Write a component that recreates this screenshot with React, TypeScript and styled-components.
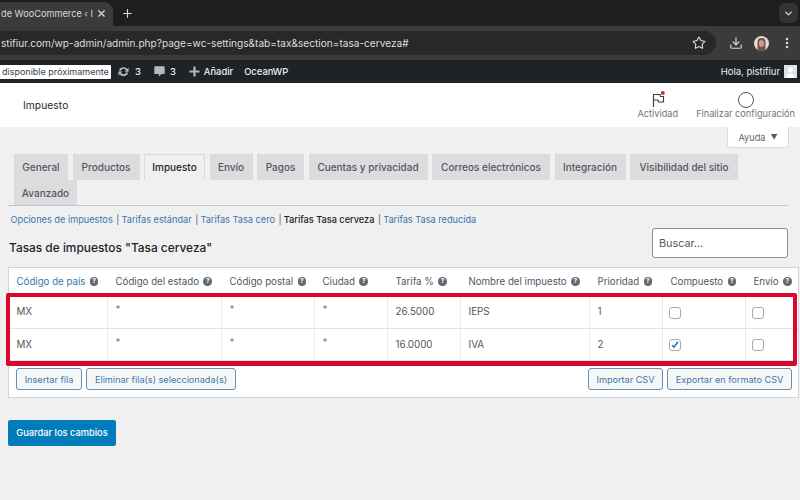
import React from "react";
import styled, { createGlobalStyle } from "styled-components";
import { X, Plus, Star, Download, MoreVertical, ChevronDown } from "lucide-react";

const Global = createGlobalStyle`
  html, body { margin: 0; padding: 0; background: #f0f0f1; }
  body { width: 800px; height: 500px; overflow: hidden; font-family: Inter, "Liberation Sans", sans-serif; color: #3c434a; }
  * { box-sizing: border-box; }
`;

const Page = styled.div`position: relative; width: 800px; height: 500px; overflow: hidden;`;

const TabStrip = styled.div`display: flex; align-items: flex-end; height: 26px; background: #1e1e1f; color: #e3e3e3;`;
const BrowserTab = styled.div`
  display: flex; align-items: center; justify-content: space-between; width: 113px; height: 24px; padding: 0 6px 2px 1px;
  background: #3b3b3c; border-radius: 0 9px 0 0; font-size: 9.2px; white-space: nowrap;
`;
const TabTitle = styled.span`color: #d8d8d8;`;
const NewTab = styled.div`display: flex; align-self: center; margin-left: 8px; color: #d8d8d8;`;
const TabMenu = styled.div`
  display: flex; align-items: center; justify-content: center; align-self: center;
  width: 19px; height: 20px; margin-left: auto; margin-right: 2px; border-radius: 6px; background: #343435; color: #dcdcdc;
`;

const Toolbar = styled.div`display: flex; align-items: flex-start; height: 34px; padding-top: 5px; background: #3b3b3c; color: #d8d8d8;`;
const Address = styled.div`
  display: flex; align-items: center; width: 716px; height: 24px; padding: 0 10px 0 1px; border-radius: 0 12px 12px 0;
  background: #282829; color: #dedede; font-size: 10.1px; white-space: nowrap;
`;
const Url = styled.span`flex: 1;`;
const ToolIcons = styled.div`display: flex; align-items: center; flex: 1; height: 24px; padding-left: 13px; gap: 11px;`;

const AdminBar = styled.div`
  display: flex; align-items: center; height: 23px; background: #1d2327; color: #eef0f1; font-size: 9.4px; font-weight: 500; white-space: nowrap;
`;
const Notice = styled.div`
  display: flex; align-items: center; width: 111px; height: 14px; padding-left: 2px; background: #fff; color: #3c434a; font-size: 9px; font-weight: 400; border-radius: 0 1px 1px 0;
`;
const BarItem = styled.div<{ $gap?: number; $left?: number }>`
  display: flex; align-items: center; gap: ${p => p.$gap ?? 5}px; margin-left: ${p => p.$left ?? 0}px;
`;
const Greeting = styled.div`display: flex; align-items: center; gap: 4px; margin-left: auto; margin-right: 3px; font-size: 9.5px; font-weight: 400;`;
const UserPic = styled.svg`display: block; width: 13px; height: 13px; background: #dfe1e3;`;

const Header = styled.div`display: flex; align-items: flex-start; height: 44px; background: #fff;`;
const HeaderTitle = styled.div`margin: 16px 0 0 23px; font-size: 10.2px; color: #23282d; letter-spacing: 0.1px;`;
const HeaderActions = styled.div`display: flex; margin-left: auto; margin-right: 5px; gap: 18px;`;
const HeaderAction = styled.div`
  display: flex; flex-direction: column; align-items: center; padding-top: 8px; font-size: 9.2px; color: #757575; white-space: nowrap;
`;
const ActionIcon = styled.div`display: flex; justify-content: center; align-items: flex-end; height: 17px;`;
const Ring = styled.div`width: 16px; height: 16px; border-radius: 50%; border: 1.2px solid #50575e;`;

const HelpRow = styled.div`display: flex; justify-content: flex-end; height: 27px; padding-right: 11px;`;
const HelpButton = styled.div`
  display: flex; align-items: center; justify-content: center; gap: 5px; width: 62px; height: 21px; background: #fff;
  border: 1px solid #dcdcde; border-top: 0; border-radius: 0 0 3px 3px; font-size: 9.2px; color: #646970;
`;
const Caret = styled.span`font-size: 7px; color: #50575e;`;

const TabsNav = styled.nav`
  display: flex; flex-wrap: wrap; width: 780px; margin-left: 8px; padding-left: 6px; column-gap: 4.5px; border-bottom: 1px solid #c3c4c7;
`;
const WcTab = styled.div<{ $w: number; $active?: boolean }>`
  display: flex; align-items: center; justify-content: center; width: ${p => p.$w}px; height: 25.5px;
  font-size: 10px; font-weight: 500; white-space: nowrap;
  background: ${p => (p.$active ? "#f0f0f1" : "#dcdcde")};
  color: ${p => (p.$active ? "#1d2327" : "#50575e")};
  border: 1px solid ${p => (p.$active ? "#d8d9db" : "#dcdcde")};
  border-bottom: 0;
`;

const SubNav = styled.div`
  display: flex; margin: 7px 0 0 10.5px; height: 13px; align-items: center; font-size: 9.2px; color: #50575e; white-space: nowrap;
`;
const SubLink = styled.span<{ $current?: boolean }>`
  color: ${p => (p.$current ? "#1d2327" : "#3a77ab")}; font-weight: ${p => (p.$current ? 500 : 400)};
`;
const Sep = styled.span`margin: 0 2.2px 0 3.5px; color: #50575e;`;

const TitleRow = styled.div`display: flex; align-items: flex-start; height: 41px; margin: 0 12px 0 9px;`;
const Title = styled.h2`margin: 14px 0 0; font-size: 11.9px; font-weight: 500; color: #1d2327; white-space: nowrap;`;
const Search = styled.div`
  display: flex; align-items: center; width: 136px; height: 30px; margin: 2px 0 0 auto; padding-left: 6px; background: #fff;
  border: 1px solid #8c8f94; border-radius: 3px; font-size: 10.8px; color: #50575e;
`;

const TableBox = styled.div`width: 791px; height: 131px; margin-left: 8px; background: #fff; border: 1px solid #d3d4d6;`;
const Cols = "99px 114px 93px 73px 73px 129px 73px 83px 53px";
const HeadRow = styled.div`display: grid; grid-template-columns: ${Cols}; height: 28px; align-items: center; border-bottom: 1px solid #eee;`;
const HeadCell = styled.div<{ $link?: boolean }>`
  display: flex; align-items: center; gap: 4.5px; padding-left: 7.5px; font-size: 9.7px; white-space: nowrap;
  color: ${p => (p.$link ? "#3a77ab" : "#50575e")};
`;
const Tip = styled.span`
  display: inline-flex; align-items: center; justify-content: center; width: 8.5px; height: 8.5px; border-radius: 50%;
  background: #646970; color: #fff; font-size: 6.5px; font-weight: 700; line-height: 1;
`;
const Row = styled.div`display: grid; grid-template-columns: ${Cols}; height: 32.5px; border-bottom: 1px solid #e4e4e6;`;
const Cell = styled.div`
  display: flex; align-items: center; padding-left: 7.5px; font-size: 9.8px; color: #50575e; border-right: 1px solid #eaeaeb;
  &:last-child { border-right: 0; }
`;
const Asterisk = styled.span`padding-bottom: 4px; color: #7b8187;`;
const Box = styled.span`
  display: flex; align-items: center; justify-content: center; width: 12px; height: 12px; margin: 2px 0 0 -2px; background: #fff;
  border: 1px solid #a7aaad; border-radius: 3px;
`;

const Footer = styled.div`display: flex; gap: 4px; padding: 7px 6px 0 7px;`;
const Spacer = styled.div`flex: 1;`;
const SmallButton = styled.div<{ $w: number }>`
  display: flex; align-items: center; justify-content: center; width: ${p => p.$w}px; height: 22px; font-size: 9.15px; white-space: nowrap;
  color: #3a77ab; background: #f6f7f7; border: 1px solid #6b8fb0; border-radius: 3px;
`;

const SaveButton = styled.div`
  display: flex; align-items: center; justify-content: center; width: 108px; height: 25.5px; margin: 22px 0 0 8px;
  background: #007cba; color: #fff; border-radius: 2px; font-size: 9.3px; font-weight: 500; white-space: nowrap;
`;

const Highlight = styled.div`
  position: absolute; left: 6px; top: 293px; width: 791px; height: 73px; border: 4px solid #d9062e; border-bottom-width: 5px; border-radius: 2px; pointer-events: none;
`;

const tabs: [string, number, boolean?][] = [
  ["General", 54], ["Productos", 67], ["Impuesto", 61, true], ["Envío", 43], ["Pagos", 47],
  ["Cuentas y privacidad", 119], ["Correos electrónicos", 118], ["Integración", 71], ["Visibilidad del sitio", 108],
  ["Avanzado", 63],
];
const heads = ["Código de país", "Código del estado", "Código postal", "Ciudad", "Tarifa %", "Nombre del impuesto", "Prioridad", "Compuesto", "Envío"];
const rows = [
  { c: "MX", rate: "26.5000", name: "IEPS", pr: "1", comp: false },
  { c: "MX", rate: "16.0000", name: "IVA", pr: "2", comp: true },
];

export default function App() {
  return (
    <Page>
      <Global />
      <TabStrip>
        <BrowserTab>
          <TabTitle>de WooCommerce ‹ I</TabTitle>
          <X size={11} strokeWidth={2.4} />
        </BrowserTab>
        <NewTab><Plus size={13} strokeWidth={2.2} /></NewTab>
        <TabMenu><ChevronDown size={11} strokeWidth={2.6} /></TabMenu>
      </TabStrip>
      <Toolbar>
        <Address>
          <Url>stifiur.com/wp-admin/admin.php?page=wc-settings&amp;tab=tax&amp;section=tasa-cerveza#</Url>
          <Star size={14} strokeWidth={1.8} />
        </Address>
        <ToolIcons>
          <Download size={14} strokeWidth={2} />
          <svg width="15" height="15" viewBox="0 0 15 15">
            <circle cx="7.500" cy="7.500" r="7.500" fill="#e8dcd2" />
            <path d="M3.500 15V6a4 4 0 0 1 8 0v9z" fill="#6d5650" />
            <ellipse cx="7.500" cy="7.500" rx="2.600" ry="3.400" fill="#c79a8c" />
          </svg>
          <MoreVertical size={14} strokeWidth={2.4} />
        </ToolIcons>
      </Toolbar>
      <AdminBar>
        <Notice>disponible próximamente</Notice>
        <BarItem $left={6}>
          <svg width="13" height="13" viewBox="0 0 20 20" fill="#b4b9be">
            <path d="M10.2 3.300c2.300 0 4.300 1.100 5.600 2.900l2-2v6h-6l2.100-2.100c-.8-1.300-2.200-2.200-3.700-2.200-2 0-3.700 1.300-4.200 3.200l-3-.8c.9-3.300 3.800-5 7.200-5zM2.200 10h6L6.100 12.100c.8 1.300 2.200 2.200 3.800 2.200 2 0 3.700-1.300 4.200-3.200l3 .8c-.9 3.300-3.800 5.400-7.200 5.400-2.300 0-4.300-1.100-5.700-2.900l-2 2z" />
          </svg>
          3
        </BarItem>
        <BarItem $left={12} $gap={4}>
          <svg width="13" height="13" viewBox="0 0 20 20" fill="#b4b9be">
            <path d="M3 2h14c.6 0 1 .4 1 1v10c0 .6-.4 1-1 1h-4l-4 4v-4H3c-.6 0-1-.4-1-1V3c0-.6.4-1 1-1z" />
          </svg>
          3
        </BarItem>
        <BarItem $left={13} $gap={4}>
          <svg width="11" height="11" viewBox="0 0 20 20" fill="#b4b9be">
            <path d="M8 1h4v7h7v4h-7v7H8v-7H1V8h7z" />
          </svg>
          Añadir
        </BarItem>
        <BarItem $left={11}>OceanWP</BarItem>
        <Greeting>
          Hola, pistifiur
          <UserPic viewBox="0 0 20 20">
            <path fill="#fff" d="M10 3.500a3.600 3.600 0 0 1 3.600 3.800c0 2.200-1.600 4.200-3.600 4.200S6.400 9.500 6.400 7.300A3.600 3.600 0 0 1 10 3.500zM3.500 20c0-4.500 2.500-7 6.500-7s6.500 2.500 6.500 7z" />
          </UserPic>
        </Greeting>
      </AdminBar>
      <Header>
        <HeaderTitle>Impuesto</HeaderTitle>
        <HeaderActions>
          <HeaderAction>
            <ActionIcon>
              <svg width="16" height="17" viewBox="0 0 16 17" fill="none" stroke="#3c434a" strokeWidth="1.2">
                <path d="M3.500 16V3.500H10l.5 2h3V11H8.500L8 9H3.500" />
                <circle cx="12.800" cy="2" r="2" fill="#d9263f" stroke="none" />
              </svg>
            </ActionIcon>
            Actividad
          </HeaderAction>
          <HeaderAction>
            <ActionIcon><Ring /></ActionIcon>
            Finalizar configuración
          </HeaderAction>
        </HeaderActions>
      </Header>
      <HelpRow>
        <HelpButton>Ayuda <Caret>▼</Caret></HelpButton>
      </HelpRow>
      <TabsNav>
        {tabs.map(([t, w, a]) => (
          <WcTab key={t} $w={w} $active={a}>{t}</WcTab>
        ))}
      </TabsNav>
      <SubNav>
        <SubLink>Opciones de impuestos</SubLink><Sep>|</Sep>
        <SubLink>Tarifas estándar</SubLink><Sep>|</Sep>
        <SubLink>Tarifas Tasa cero</SubLink><Sep>|</Sep>
        <SubLink $current>Tarifas Tasa cerveza</SubLink><Sep>|</Sep>
        <SubLink>Tarifas Tasa reducida</SubLink>
      </SubNav>
      <TitleRow>
        <Title>Tasas de impuestos "Tasa cerveza"</Title>
        <Search>Buscar...</Search>
      </TitleRow>
      <TableBox>
        <HeadRow>
          {heads.map((h, i) => (
            <HeadCell key={h} $link={i === 0}>{h} <Tip>?</Tip></HeadCell>
          ))}
        </HeadRow>
        {rows.map(r => (
          <Row key={r.name}>
            <Cell>{r.c}</Cell>
            <Cell><Asterisk>*</Asterisk></Cell>
            <Cell><Asterisk>*</Asterisk></Cell>
            <Cell><Asterisk>*</Asterisk></Cell>
            <Cell>{r.rate}</Cell>
            <Cell>{r.name}</Cell>
            <Cell>{r.pr}</Cell>
            <Cell>
              <Box>
                {r.comp && (
                  <svg width="10" height="10" viewBox="0 0 10 10" fill="none" stroke="#2271b1" strokeWidth="1.5">
                    <path d="M2 5.200l2 2L8 1.800" />
                  </svg>
                )}
              </Box>
            </Cell>
            <Cell><Box /></Cell>
          </Row>
        ))}
        <Footer>
          <SmallButton $w={66}>Insertar fila</SmallButton>
          <SmallButton $w={150}>Eliminar fila(s) seleccionada(s)</SmallButton>
          <Spacer />
          <SmallButton $w={75}>Importar CSV</SmallButton>
          <SmallButton $w={125}>Exportar en formato CSV</SmallButton>
        </Footer>
      </TableBox>
      <SaveButton>Guardar los cambios</SaveButton>
      <Highlight />
    </Page>
  );
}
